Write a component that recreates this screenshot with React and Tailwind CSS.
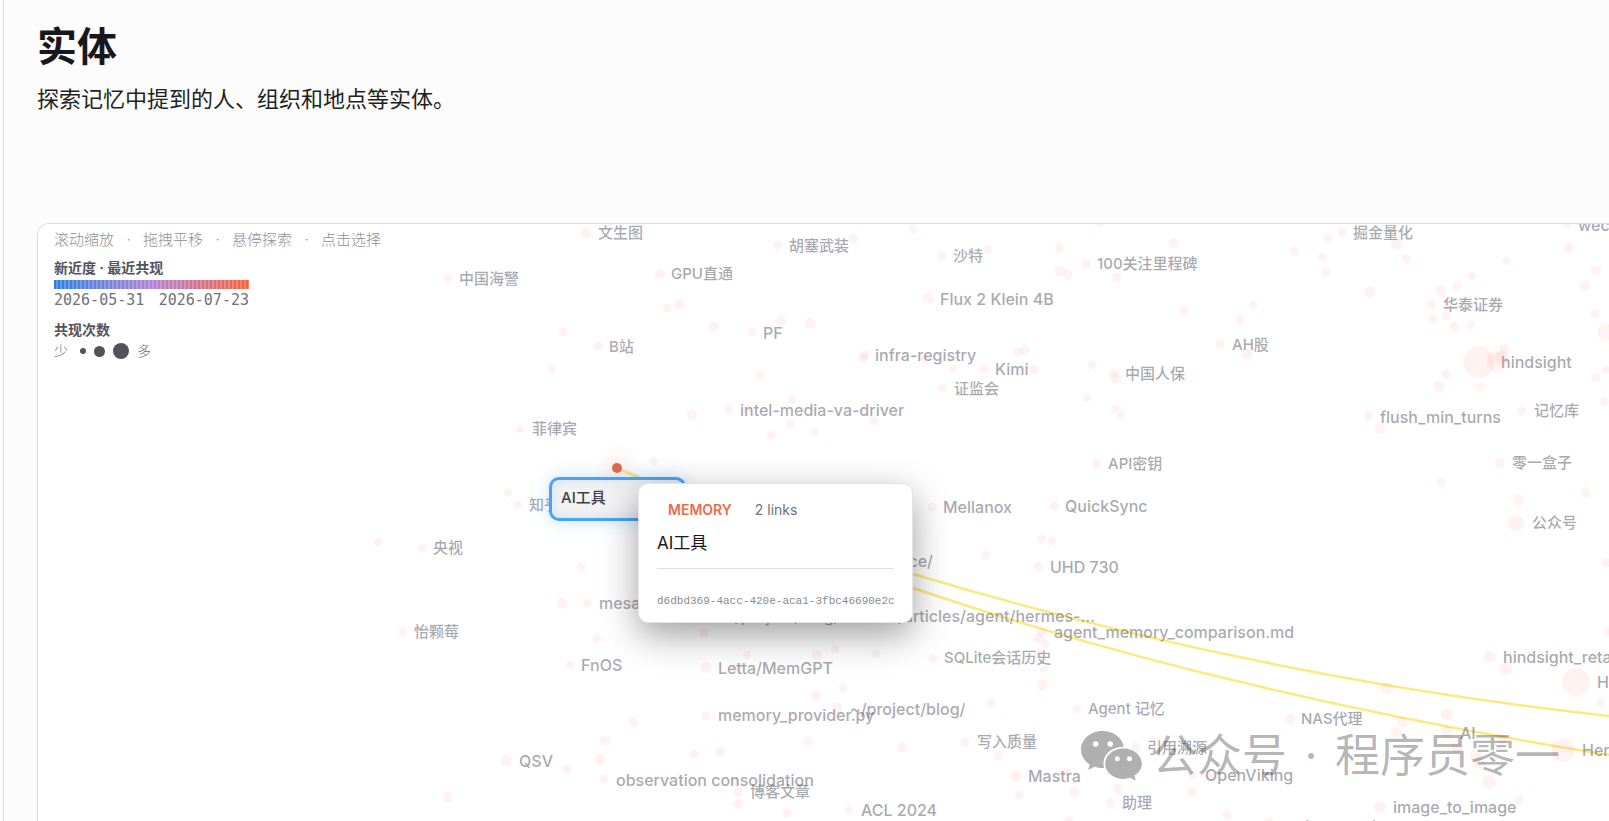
import { useState } from "react";

// [x, y, radius]
const nodes = [
  [586, 233, 5], [448, 278, 4.5], [660, 274, 5], [667, 308, 4.5], [679, 305, 5],
  [563, 332, 4], [598, 346, 4.5], [551, 369, 4], [714, 327, 5], [752, 332, 4.5],
  [781, 321, 5], [810, 323, 5.5], [760, 375, 4.5], [792, 400, 4], [729, 409, 4],
  [748, 409, 4], [692, 415, 5], [790, 424, 4], [771, 435, 4.5], [815, 432, 4],
  [520, 429, 4], [778, 245, 4], [853, 239, 4.5], [913, 229, 4], [942, 256, 4],
  [988, 249, 4.5], [1059, 248, 4.5], [1100, 223, 4], [1086, 264, 4.5], [1173, 243, 5],
  [1060, 271, 5.5], [1068, 275, 4.5], [1117, 277, 4.5], [928, 298, 5.5], [1184, 311, 5],
  [865, 355, 4.5], [863, 358, 4.5], [925, 359, 4.5], [1018, 352, 4.5], [1025, 350, 4.5],
  [953, 369, 4], [984, 369, 5], [1034, 370, 4.5], [942, 388, 4], [1092, 365, 4],
  [1113, 373, 4.5], [1116, 378, 5.5], [1087, 398, 4], [1115, 409, 4], [1121, 415, 4],
  [874, 421, 4], [1342, 232, 4.5], [1328, 238, 4.5], [1294, 251, 4.5], [1322, 257, 4],
  [1326, 272, 4], [1397, 244, 6], [1406, 259, 4.5], [1567, 224, 4], [1569, 247, 5],
  [1506, 261, 4], [1596, 270, 5], [1472, 276, 4], [1457, 286, 4.5], [1585, 286, 5],
  [1441, 291, 5.5], [1370, 292, 5.5], [1431, 304, 4.5], [1447, 304, 4], [1446, 316, 4.5],
  [1433, 319, 4.5], [1595, 313, 4.5], [1454, 327, 5], [1471, 325, 4], [1253, 305, 4],
  [1240, 319, 4.5], [1220, 344, 4.5], [1247, 354, 5], [1606, 332, 8.5], [1479, 362, 15.5],
  [1497, 362, 10.5], [1502, 357, 7], [1504, 349, 5], [1446, 374, 4.5], [1439, 386, 5.5],
  [1480, 387, 4], [1596, 377, 4.5], [1606, 370, 4], [1604, 401, 4.5], [1522, 411, 4.5],
  [1369, 416, 4.5], [1380, 429, 5], [508, 493, 4], [518, 505, 4], [378, 542, 4.5],
  [422, 548, 4], [581, 567, 4.5], [562, 603, 5.5], [587, 603, 4.5], [633, 603, 4],
  [403, 632, 4], [597, 639, 4.5], [654, 461, 4], [704, 633, 4.5], [932, 507, 4.5],
  [835, 649, 4], [747, 655, 4], [817, 655, 5], [876, 654, 4.5], [933, 658, 4.5],
  [1097, 464, 4.5], [1054, 506, 4.5], [1042, 539, 4.5], [1052, 541, 4], [986, 555, 4.5],
  [1038, 567, 5], [1042, 632, 4.5], [1038, 638, 5], [1045, 644, 4.5], [1038, 654, 4.5],
  [1044, 669, 4], [1500, 463, 5], [1441, 482, 4.5], [1519, 500, 5.5], [1585, 493, 4.5],
  [1516, 523, 8], [1606, 563, 4.5], [1608, 632, 4.5], [1490, 657, 6], [1506, 669, 6.5],
  [1576, 682, 14], [1387, 688, 6], [570, 665, 4], [633, 722, 5], [605, 741, 5],
  [600, 759, 6], [506, 761, 5.5], [567, 769, 4.5], [604, 779, 4.5], [448, 797, 5],
  [706, 667, 5.5], [736, 668, 4], [706, 716, 4.5], [694, 754, 4.5], [720, 752, 5],
  [735, 781, 4], [738, 792, 4.5], [738, 804, 5], [816, 695, 6], [843, 688, 4.5],
  [837, 708, 5.5], [808, 741, 4], [902, 747, 5], [991, 703, 4.5], [1042, 685, 5.5],
  [1077, 709, 4], [965, 742, 4.5], [998, 756, 4.5], [1016, 776, 5.5], [1066, 772, 4.5],
  [1019, 795, 4.5], [1074, 792, 5], [1118, 789, 5], [1110, 803, 4.5], [1069, 821, 4.5],
  [849, 810, 4], [787, 813, 4.5], [1136, 747, 4.5], [1290, 719, 5], [1402, 722, 5],
  [1396, 732, 5], [1447, 714, 6], [1447, 732, 6], [1457, 747, 6], [1476, 755, 6],
  [1480, 763, 6], [1489, 782, 7], [1563, 750, 11.5], [1601, 703, 4], [1519, 800, 4.5],
  [1380, 807, 6], [1192, 792, 5], [1193, 775, 4], [1210, 776, 4.5], [1227, 815, 4.5],
  [1269, 823, 5], [1502, 740, 5],
];

// [text, x, baseline, anchor]
const cjkLabels = [
  ["文生图", 598, 238], ["中国海警", 459, 284], ["GPU直通", 671, 279],
  ["胡塞武装", 789, 251], ["沙特", 953, 261], ["100关注里程碑", 1097, 269],
  ["掘金量化", 1353, 238], ["华泰证券", 1443, 310], ["B站", 609, 352],
  ["证监会", 954, 394], ["中国人保", 1125, 379], ["AH股", 1232, 350],
  ["记忆库", 1534, 416], ["菲律宾", 532, 434], ["API密钥", 1108, 469],
  ["零一盒子", 1512, 468], ["知乎", 529, 510], ["公众号", 1532, 528],
  ["央视", 433, 553], ["怡颗莓", 414, 637], ["SQLite会话历史", 944, 663],
  ["Agent 记忆", 1088, 714], ["NAS代理", 1301, 724], ["写入质量", 977, 747],
  ["引用溯源", 1147, 753], ["博客文章", 750, 797], ["助理", 1122, 808],
];

const latinLabels = [
  ["wechat", 1578, 231], ["Flux 2 Klein 4B", 940, 305], ["PF", 763, 339],
  ["infra-registry", 875, 361], ["Kimi", 995, 375], ["hindsight", 1501, 368],
  ["intel-media-va-driver", 740, 416], ["flush_min_turns", 1380, 423],
  ["Mellanox", 943, 513], ["QuickSync", 1065, 512], ["~/workspace/", 933, 567, "end"],
  ["UHD 730", 1050, 573], ["mesa", 599, 609],
  ["~/project/blog/content/articles/agent/hermes-...", 1095, 622, "end"],
  ["agent_memory_comparison.md", 1054, 638], ["hindsight_retain", 1503, 663],
  ["FnOS", 581, 671], ["Letta/MemGPT", 718, 674], ["Hermes", 1597, 688],
  ["~/project/blog/", 850, 715], ["memory_provider.py", 718, 721],
  ["AI", 1460, 739], ["Hermes", 1582, 756], ["QSV", 519, 767],
  ["Mastra", 1028, 782], ["OpenViking", 1205, 781],
  ["observation consolidation", 616, 786], ["ACL 2024", 861, 816],
  ["image_to_image", 1393, 813], ["auth_reward", 1281, 832],
];

const edges = [
  "M617 468 Q760 528 913 574 Q1260 678 1609 716",
  "M617 468 Q766 538 913 588 Q1222 693 1609 755",
];

const hints = ["滚动缩放", "拖拽平移", "悬停探索", "点击选择"];

const Labels = ({ items, className }) => {
  return (
    <g className={className} fill="#52525f" fillOpacity="0.5">
      {items.map(([text, x, y, anchor]) => (
        <text key={`${text}-${x}`} x={x} y={y} textAnchor={anchor || "start"}>
          {text}
        </text>
      ))}
    </g>
  );
};

const Graph = () => {
  return (
    <svg className="absolute inset-0 h-full w-full" aria-label="实体关系图">
      <defs>
        <radialGradient id="glow">
          <stop offset="0" stopColor="#f26a4b" stopOpacity="0.1" />
          <stop offset="1" stopColor="#f26a4b" stopOpacity="0" />
        </radialGradient>
      </defs>
      <g transform="translate(-38 -224)">
        <g fill="none" stroke="#fde047" strokeWidth="2.4" opacity="0.7">
          {edges.map((d) => (
            <path key={d} d={d} />
          ))}
        </g>
        <Labels items={cjkLabels} className="text-[15px] font-medium" />
        <Labels items={latinLabels} className="text-[16px] font-medium" />
        {nodes.map(([x, y, r]) => (
          <circle key={`${x}-${y}`} cx={x} cy={y} r={r} fill="#fa5a3c" fillOpacity="0.08" />
        ))}
        <circle cx="617" cy="468" r="25" fill="url(#glow)" />
        <circle cx="617" cy="468" r="5" fill="#e5664b" />
      </g>
    </svg>
  );
};

const Legend = () => {
  return (
    <div className="relative flex flex-col items-start pl-4 pt-1 text-[14px] leading-5 text-[#71717a]">
      <p className="flex gap-[10px] text-[15px] leading-6 font-light text-[#8f8f99]">
        {hints.map((hint, i) => (
          <span key={hint} className="flex gap-[10px]">
            {i > 0 && <span className="w-[9px] text-center">·</span>}
            {hint}
          </span>
        ))}
      </p>
      <p className="mt-[6px] font-bold text-[#52525b]">新近度 · 最近共现</p>
      <div className="mt-[2px] h-[9px] w-[195px] bg-[repeating-linear-gradient(90deg,transparent_0_2px,rgba(255,255,255,0.22)_2px_4px),linear-gradient(90deg,#2f7fe0,#b083d3_50%,#f5623a)]" />
      <p className="mt-px flex w-[195px] justify-between font-['DejaVu_Sans_Mono',monospace] text-[15px]">
        <span>2026-05-31</span>
        <span>2026-07-23</span>
      </p>
      <p className="mt-[10px] font-bold text-[#52525b]">共现次数</p>
      <p className="mt-px flex items-center font-light">
        少
        <span className="ml-3 h-[6px] w-[6px] rounded-full bg-[#52525b]" />
        <span className="ml-2 h-[11px] w-[11px] rounded-full bg-[#52525b]" />
        <span className="ml-2 mr-2 h-4 w-4 rounded-full bg-[#52525b]" />
        多
      </p>
    </div>
  );
};

const Tooltip = () => {
  return (
    <div className="absolute left-[600px] top-[259px] w-[275px] rounded-[10px] border border-[#e4e4e7] bg-white px-[18px] pb-[11px] pt-4 shadow-[0_12px_36px_rgba(0,0,0,0.38)]">
      <div className="flex items-center gap-[23px] pl-[11px] text-[14px] leading-5">
        <span className="font-semibold text-[#f06a4a]">MEMORY</span>
        <span className="text-[#71717a]">2 links</span>
      </div>
      <p className="mt-[11px] text-[17px] leading-6 text-[#18181b]">AI工具</p>
      <hr className="mt-[13px] border-[#e0e0e2]" />
      <p className="mt-[22px] whitespace-nowrap font-['Liberation_Mono',monospace] text-[11px] leading-5 text-[#8a8a92]">
        d6dbd369-4acc-420e-aca1-3fbc46690e2c
      </p>
    </div>
  );
};

const Watermark = () => {
  return (
    <div className="absolute left-[1043px] top-[500px] flex items-center text-[45px] leading-[64px] text-black/30">
      <svg className="mr-[10px] h-[50px] w-[61px]" viewBox="0 0 61 50" fill="#b0b0b0">
        <path d="M21.500 0C9.600 0 0 8.200 0 18.600c0 6.200 3.300 11.500 8.700 15l-1.500 5.400 6.200-3.300c3 .9 6.200 1.500 9.700 1.300a18 18 0 0 1-.7-4.600c0-9.200 8.600-16.600 20.400-16.600C41.300 6.600 32.500 0 21.500 0z" />
        <path d="M42.500 17.500c-10.200 0-18.300 6.800-18.300 15.200s8.100 15.200 18.300 15.200c2.400 0 4.600-.4 6.700-1.100l5.600 2.700-1.400-4.900c4.600-2.800 7.400-7 7.400-11.900 0-8.400-8.100-15.200-18.300-15.200z" />
        <g fill="#fff">
          <circle cx="14.700" cy="13" r="2.800" />
          <circle cx="29.200" cy="13" r="2.800" />
          <circle cx="36.300" cy="27.800" r="2.500" />
          <circle cx="48.500" cy="27.800" r="2.500" />
        </g>
      </svg>
      <span>公众号</span>
      <span className="w-12 text-center">·</span>
      <span>程序员零一</span>
    </div>
  );
};

const App = () => {
  const [selected, setSelected] = useState(true);

  return (
    <div className="flex h-screen overflow-hidden bg-[#fcfcfc] font-[Inter,'Noto_Sans_CJK_SC',sans-serif]">
      <aside className="w-1 shrink-0 border-r border-[#dcdcde]" />
      <main className="flex min-w-0 flex-1 flex-col pl-[33px]">
        <h1 className="pt-[22px] text-[40px] font-bold leading-[50px] text-[#18181b]">实体</h1>
        <p className="mt-[11px] text-[22px] leading-8 text-[#1f1f23]">
          探索记忆中提到的人、组织和地点等实体。
        </p>
        <section className="relative mt-[108px] flex-1 overflow-hidden rounded-tl-[12px] border-l border-t border-[#dcdcde] bg-white">
          <Graph />
          <Legend />
          <button
            className="absolute left-[511px] top-[253px] h-11 w-[137px] rounded-[10px] border-[3px] border-[#45a4f5] bg-[#f3f3f4] pb-[2px] pl-[9px] text-left text-[15px] font-medium text-[#3f3f46] shadow-[0_0_18px_rgba(69,164,245,0.3),inset_0_0_14px_rgba(69,130,200,0.16)]"
            onClick={() => setSelected(!selected)}
          >
            AI工具
          </button>
          {selected && <Tooltip />}
          <Watermark />
        </section>
      </main>
    </div>
  );
};

export default App;
